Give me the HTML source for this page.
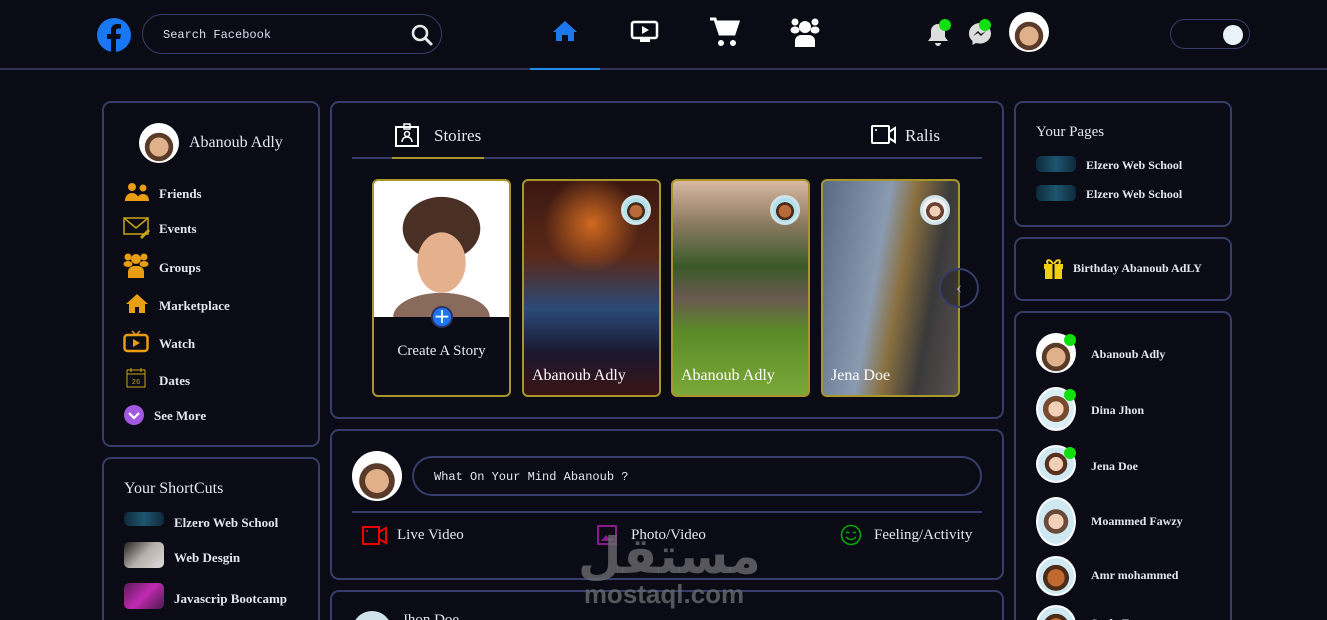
<!DOCTYPE html>
<html style="width:1327px;height:620px;overflow:hidden"><head><meta charset="utf-8"><style>
*{box-sizing:border-box;margin:0;padding:0}
html,body{width:1327px;height:620px;overflow:hidden}
body{background:#0a0b14;font-family:"Liberation Serif",serif;color:#e4e6f2;position:relative}
.abs{position:absolute}
.panel{position:absolute;border:2px solid #363d6b;border-radius:9px}
.av{position:absolute;border-radius:50%;overflow:hidden;background:radial-gradient(circle at 50% 60%,#e0b08a 0 30%,#5a3a28 31% 45%,#fff 46%)}
.b{font-weight:bold;font-size:13px;position:absolute;color:#e2e4f0}
.green{position:absolute;width:12px;height:12px;border-radius:50%;background:#10e010}
.card{position:absolute;top:179px;width:139px;height:218px;border:2px solid #a8962c;border-radius:6px;overflow:hidden}
.card .n{position:absolute;left:8px;bottom:10px;font-size:16px;color:#fff}
.sav{position:absolute;right:8px;top:14px;width:30px;height:30px;border-radius:50%;border:3px solid #cfe3ea;background:radial-gradient(circle at 50% 55%,#b86b3a 0 35%,#4a2a18 36% 50%,#aee0ee 51%)}
.thumb{position:absolute;width:40px;height:26px;border-radius:5px}
</style></head><body>
<div class="abs" style="left:0;top:68px;width:1327px;height:2px;background:#2d3152"></div>
<div class="abs" style="left:530px;top:68px;width:70px;height:2px;background:#1f8bea"></div>
<svg class="abs" style="left:96px;top:17px" width="36" height="36" viewBox="0 0 36 36"><circle cx="18" cy="18" r="17" fill="#1877f2"/><path d="M20 36V22h4l1-5h-5v-3c0-1.5.5-2.5 2.6-2.5H25V7.2c-.5 0-2-.2-3.8-.2-3.8 0-6.2 2.3-6.2 6.4V17h-4v5h4v14z" fill="#0a0b14"/></svg>
<div class="abs" style="left:142px;top:14px;width:300px;height:40px;border:1px solid #373e6a;border-radius:20px"></div>
<div class="abs" style="left:163px;top:28px;font-family:'Liberation Mono',monospace;font-size:12px;color:#dde">Search Facebook</div>
<svg class="abs" style="left:410px;top:23px" width="24" height="24" viewBox="0 0 24 24"><circle cx="10" cy="10" r="7" fill="none" stroke="#e8e8e8" stroke-width="2.6"/><path d="M15 15l6 6" stroke="#e8e8e8" stroke-width="3" stroke-linecap="round"/></svg>
<svg class="abs" style="left:552px;top:20px" width="26" height="22" viewBox="0 0 26 22"><path d="M13 1L1 12h3v9h6v-6h6v6h6v-9h3z" fill="#1d78f0"/></svg>
<svg class="abs" style="left:630px;top:20px" width="30" height="24" viewBox="0 0 30 24"><rect x="2" y="2" width="25" height="16" rx="2" fill="none" stroke="#fff" stroke-width="2.5"/><path d="M12 6v8l7-4z" fill="#fff"/><rect x="10" y="19" width="10" height="3" fill="#fff"/></svg>
<svg class="abs" style="left:709px;top:17px" width="32" height="30" viewBox="0 0 32 30"><path d="M1 2h5l5 15h14l4-12H8" fill="none" stroke="#fff" stroke-width="3"/><path d="M8 5h21l-4 12H11z" fill="#fff"/><circle cx="12" cy="26" r="3" fill="#fff"/><circle cx="24" cy="26" r="3" fill="#fff"/></svg>
<svg class="abs" style="left:789px;top:17px" width="32" height="30" viewBox="0 0 32 30"><circle cx="6" cy="5" r="3.5" fill="#fff"/><circle cx="26" cy="5" r="3.5" fill="#fff"/><circle cx="16" cy="10" r="6" fill="#fff"/><ellipse cx="6" cy="13" rx="4.5" ry="3.5" fill="#fff"/><ellipse cx="26" cy="13" rx="4.5" ry="3.5" fill="#fff"/><path d="M6 30v-6a6 6 0 0 1 6-6h8a6 6 0 0 1 6 6v6z" fill="#fff"/></svg>
<svg class="abs" style="left:927px;top:22px" width="22" height="24" viewBox="0 0 22 24"><path d="M11 2a7 7 0 0 0-7 7v6l-3 4h20l-3-4V9a7 7 0 0 0-7-7zM8 21a3 3 0 0 0 6 0z" fill="#ddd"/></svg>
<div class="green" style="left:939px;top:19px"></div>
<svg class="abs" style="left:968px;top:22px" width="24" height="24" viewBox="0 0 24 24"><path d="M12 1C6 1 1 5.5 1 11.5c0 3 1.3 5.7 3.5 7.5v4l3.5-2c1.2.4 2.6.6 4 .6 6 0 11-4.5 11-10.1S18 1 12 1z" fill="#ddd"/><path d="M5 14l5-5 3 3 5-3-5 5-3-3z" fill="#0a0b14"/></svg>
<div class="green" style="left:979px;top:19px"></div>
<div class="av" style="left:1009px;top:12px;width:40px;height:40px"></div>
<div class="abs" style="left:1170px;top:19px;width:80px;height:30px;border:1px solid #373e6a;border-radius:15px"></div>
<div class="abs" style="left:1223px;top:25px;width:20px;height:20px;border-radius:50%;background:#e8f2f8"></div>

<div class="panel" style="left:102px;top:101px;width:218px;height:346px"></div>
<div class="av" style="left:139px;top:123px;width:40px;height:40px"></div>
<div class="abs" style="left:189px;top:134px;font-size:16px">Abanoub Adly</div>
<svg class="abs" style="left:124px;top:182px" width="26" height="20" viewBox="0 0 26 20"><circle cx="8" cy="5" r="4" fill="#e89d13"/><circle cx="19" cy="6" r="3.5" fill="#e89d13"/><path d="M1 19c0-5 3-8 7-8s7 3 7 8z M13 19c0-4 2-7 6-7s6 3 6 7z" fill="#e89d13"/></svg>
<div class="b" style="left:159px;top:186px">Friends</div>
<svg class="abs" style="left:123px;top:216px" width="27" height="23" viewBox="0 0 27 23"><rect x="1" y="2" width="24" height="16" fill="none" stroke="#c8a416" stroke-width="1.5"/><path d="M1 2l12 10 12-10" fill="none" stroke="#c8a416" stroke-width="1.5"/><path d="M17 21l8-8 2 2-8 8z" fill="#c8a416"/></svg>
<div class="b" style="left:159px;top:221px">Events</div>
<svg class="abs" style="left:123px;top:252px" width="26" height="26" viewBox="0 0 26 26"><circle cx="5" cy="5" r="3.5" fill="#e89d13"/><circle cx="21" cy="5" r="3.5" fill="#e89d13"/><circle cx="13" cy="7" r="5" fill="#e89d13"/><ellipse cx="5" cy="12" rx="4.5" ry="3" fill="#e89d13"/><ellipse cx="21" cy="12" rx="4.5" ry="3" fill="#e89d13"/><path d="M5 26v-6a6 6 0 0 1 6-6h4a6 6 0 0 1 6 6v6z" fill="#e89d13"/></svg>
<div class="b" style="left:159px;top:260px">Groups</div>
<svg class="abs" style="left:126px;top:294px" width="22" height="19" viewBox="0 0 22 19"><path d="M11 0L0 10h3v9h6v-6h4v6h6v-9h3z" fill="#e89d13"/></svg>
<div class="b" style="left:159px;top:298px">Marketplace</div>
<svg class="abs" style="left:123px;top:330px" width="26" height="23" viewBox="0 0 26 23"><path d="M9 1l4 4 4-4" stroke="#e89d13" stroke-width="1.5" fill="none"/><rect x="1.5" y="5" width="23" height="16" rx="3" fill="none" stroke="#e89d13" stroke-width="2.5"/><path d="M10 9v8l7-4z" fill="#e89d13"/></svg>
<div class="b" style="left:159px;top:336px">Watch</div>
<svg class="abs" style="left:126px;top:367px" width="20" height="21" viewBox="0 0 20 21"><rect x="1" y="3" width="18" height="17" fill="none" stroke="#c8a416" stroke-width="1"/><path d="M1 7h18M5 1v4M15 1v4" stroke="#c8a416"/><text x="10" y="17" font-size="7" fill="#c8a416" text-anchor="middle" font-family="Liberation Mono">26</text></svg>
<div class="b" style="left:159px;top:373px">Dates</div>
<svg class="abs" style="left:124px;top:405px" width="20" height="20" viewBox="0 0 20 20"><circle cx="10" cy="10" r="10" fill="#a358e0"/><path d="M5 8l5 5 5-5" stroke="#fff" stroke-width="2.2" fill="none"/></svg>
<div class="b" style="left:154px;top:408px">See More</div>

<div class="panel" style="left:102px;top:457px;width:218px;height:180px"></div>
<div class="abs" style="left:124px;top:480px;font-size:16px">Your ShortCuts</div>
<div class="thumb" style="left:124px;top:512px;height:14px;background:linear-gradient(90deg,#0e2a3a,#1e5570,#0e2a3a)"></div>
<div class="b" style="left:174px;top:515px">Elzero Web School</div>
<div class="thumb" style="left:124px;top:542px;background:linear-gradient(135deg,#222,#b8b0aa 50%,#ddd)"></div>
<div class="b" style="left:174px;top:550px">Web Desgin</div>
<div class="thumb" style="left:124px;top:583px;background:linear-gradient(135deg,#5a1a5a,#c02ab0,#4a1a4a)"></div>
<div class="b" style="left:174px;top:591px">Javascrip Bootcamp</div>

<div class="panel" style="left:330px;top:101px;width:674px;height:318px"></div>
<svg class="abs" style="left:395px;top:123px" width="25" height="24" viewBox="0 0 25 24"><rect x="1" y="4" width="22" height="19" fill="none" stroke="#fff" stroke-width="2"/><rect x="9" y="1" width="6" height="5" fill="none" stroke="#fff" stroke-width="1.5"/><circle cx="12" cy="11" r="2.5" fill="none" stroke="#fff" stroke-width="1.5"/><path d="M7 19c0-3 2-5 5-5s5 2 5 5" fill="none" stroke="#fff" stroke-width="1.5"/></svg>
<div class="abs" style="left:434px;top:126px;font-size:17px">Stoires</div>
<svg class="abs" style="left:871px;top:124px" width="26" height="22" viewBox="0 0 26 22"><rect x="1" y="2" width="17" height="17" rx="1" fill="none" stroke="#fff" stroke-width="2"/><path d="M18 8l6-4v14l-6-4" fill="none" stroke="#fff" stroke-width="2"/><circle cx="5" cy="6" r="1" fill="#fff"/></svg>
<div class="abs" style="left:905px;top:126px;font-size:17px">Ralis</div>
<div class="abs" style="left:352px;top:157px;width:630px;height:2px;background:#363d6b"></div>
<div class="abs" style="left:392px;top:157px;width:92px;height:2px;background:#a8962c"></div>

<div class="card" style="left:372px;background:#0a0b14">
 <div class="abs" style="left:0;top:0;width:135px;height:136px;background:radial-gradient(ellipse 40px 50px at 50% 60%,#e4b08e 0 60%,transparent 61%),radial-gradient(ellipse 55px 45px at 50% 35%,#4a3024 0 70%,transparent 71%),radial-gradient(ellipse 60px 30px at 50% 100%,#8a6a5a 0 80%,transparent 81%),#fff"></div>
 <div class="abs" style="left:57px;top:125px;width:22px;height:22px;border-radius:50%;background:#1d78f0;border:2px solid #2a3566;color:#fff;font-size:20px;line-height:16px;text-align:center;font-family:'DejaVu Sans'">+</div>
 <div class="abs" style="left:0;width:135px;top:162px;text-align:center;font-size:15px">Create A Story</div>
</div>
<div class="card" style="left:522px;background:radial-gradient(ellipse 60px 60px at 50% 20%,#d06a20,transparent 80%),linear-gradient(180deg,#3a1810 0%,#5a2818 35%,#2a4a78 60%,#1a1830 80%,#3a1414 100%)"><div class="sav"></div><div class="n">Abanoub Adly</div></div>
<div class="card" style="left:671px;background:linear-gradient(180deg,#d8b8a0 0%,#8a7a60 20%,#3a5a28 40%,#6a5a50 55%,#5a8a28 70%,#7aa838 100%)"><div class="sav"></div><div class="n">Abanoub Adly</div></div>
<div class="card" style="left:821px;background:linear-gradient(100deg,#5a6a80 0%,#8a9ab0 40%,#8a7040 55%,#3a3a3a 75%,#5a5050 100%)"><div class="sav" style="background:radial-gradient(circle at 50% 55%,#f0d0b8 0 30%,#6a4030 31% 50%,#f0f0f0 51%)"></div><div class="n">Jena Doe</div></div>
<div class="abs" style="left:939px;top:268px;width:40px;height:40px;border-radius:50%;border:2px solid #363d6b;background:rgba(10,11,20,.3);color:#aaa;font-size:18px;line-height:34px;text-align:center">‹</div>

<div class="panel" style="left:330px;top:429px;width:674px;height:151px"></div>
<div class="av" style="left:352px;top:451px;width:50px;height:50px;border-radius:50%"></div>
<div class="abs" style="left:412px;top:456px;width:570px;height:40px;border:2px solid #363d6b;border-radius:20px"></div>
<div class="abs" style="left:434px;top:470px;font-family:'Liberation Mono',monospace;font-size:12px">What On Your Mind Abanoub ?</div>
<div class="abs" style="left:352px;top:511px;width:630px;height:2px;background:#363d6b"></div>
<svg class="abs" style="left:362px;top:525px" width="26" height="21" viewBox="0 0 26 21"><rect x="1" y="2" width="16" height="17" fill="none" stroke="#e00" stroke-width="2"/><path d="M17 7l7-4v15l-7-4" fill="none" stroke="#e00" stroke-width="2"/><circle cx="5" cy="6" r="1.2" fill="#e00"/></svg>
<div class="abs" style="left:397px;top:527px;font-size:15px">Live Video</div>
<svg class="abs" style="left:597px;top:525px" width="20" height="20" viewBox="0 0 20 20"><rect x="1" y="1" width="18" height="18" fill="none" stroke="#8a1a8a" stroke-width="2"/><path d="M4 16l5-6 4 4 3-3v5z" fill="#8a1a8a"/></svg>
<div class="abs" style="left:631px;top:527px;font-size:15px">Photo/Video</div>
<svg class="abs" style="left:840px;top:524px" width="22" height="22" viewBox="0 0 22 22"><circle cx="11" cy="11" r="9.5" fill="none" stroke="#0a0" stroke-width="1.6"/><path d="M6 9q1.5-1.5 3 0M13 9q1.5-1.5 3 0M6 13q5 5 10 0" fill="none" stroke="#0a0" stroke-width="1.5"/></svg>
<div class="abs" style="left:874px;top:527px;font-size:15px">Feeling/Activity</div>

<div class="panel" style="left:330px;top:590px;width:674px;height:60px"></div>
<div class="av" style="left:352px;top:611px;width:40px;height:40px;background:#cfe3ea"></div>
<div class="abs" style="left:402px;top:612px;font-size:15px">Jhon Doe</div>

<div class="abs" style="left:578px;top:526px;width:172px;text-align:center;font-family:'DejaVu Sans',sans-serif;font-weight:bold;font-size:50px;color:rgba(105,105,110,.8);line-height:60px">مستقل</div>
<div class="abs" style="left:578px;top:579px;width:172px;text-align:center;font-family:'Liberation Sans',sans-serif;font-weight:bold;font-size:26px;color:rgba(105,105,110,.8)">mostaql.com</div>

<div class="panel" style="left:1014px;top:101px;width:218px;height:126px"></div>
<div class="abs" style="left:1036px;top:124px;font-size:15px">Your Pages</div>
<div class="thumb" style="left:1036px;top:156px;height:16px;background:linear-gradient(90deg,#0e2a3a,#1e5570,#0e2a3a)"></div>
<div class="b" style="left:1086px;top:158px;font-size:12px">Elzero Web School</div>
<div class="thumb" style="left:1036px;top:185px;height:16px;background:linear-gradient(90deg,#0e2a3a,#1e5570,#0e2a3a)"></div>
<div class="b" style="left:1086px;top:187px;font-size:12px">Elzero Web School</div>

<div class="panel" style="left:1014px;top:237px;width:218px;height:64px"></div>
<svg class="abs" style="left:1043px;top:258px" width="21" height="21" viewBox="0 0 21 21"><path d="M10 6C7 0 2 2 5 6M11 6c3-6 8-4 5 0" fill="none" stroke="#f0d010" stroke-width="2"/><rect x="1" y="6" width="19" height="5" fill="#f0d010"/><rect x="2" y="11" width="17" height="10" fill="#f0d010"/><rect x="9.5" y="6" width="2" height="15" fill="#0a0b14"/></svg>
<div class="b" style="left:1073px;top:261px;font-size:12px">Birthday Abanoub AdLY</div>

<div class="panel" style="left:1014px;top:311px;width:218px;height:340px"></div>
<div class="av" style="left:1036px;top:333px;width:40px;height:40px"></div><div class="green" style="left:1064px;top:334px"></div>
<div class="b" style="left:1091px;top:347px;font-size:12px">Abanoub Adly</div>
<div class="av" style="left:1036px;top:387px;width:40px;height:44px;background:radial-gradient(circle at 50% 50%,#f2d0b8 0 28%,#7a4a30 29% 48%,#d8eef4 49%);border:2px solid #fff"></div><div class="green" style="left:1064px;top:389px"></div>
<div class="b" style="left:1091px;top:403px;font-size:12px">Dina Jhon</div>
<div class="av" style="left:1036px;top:445px;width:40px;height:38px;background:radial-gradient(circle at 50% 50%,#f2d0b8 0 28%,#5a3020 29% 45%,#cfe9f2 46%);border:2px solid #fff"></div><div class="green" style="left:1064px;top:447px"></div>
<div class="b" style="left:1091px;top:459px;font-size:12px">Jena Doe</div>
<div class="av" style="left:1036px;top:497px;width:40px;height:49px;background:radial-gradient(circle at 50% 50%,#f2d0b8 0 26%,#6a4a38 27% 42%,#cfe9f2 43%);border:2px solid #fff"></div>
<div class="b" style="left:1091px;top:514px;font-size:12px">Moammed Fawzy</div>
<div class="av" style="left:1036px;top:556px;width:40px;height:40px;background:radial-gradient(circle at 50% 55%,#c06a30 0 32%,#4a2a18 33% 48%,#cfe9f2 49%);border:2px solid #fff"></div>
<div class="b" style="left:1091px;top:568px;font-size:12px">Amr mohammed</div>
<div class="av" style="left:1036px;top:605px;width:40px;height:40px;background:radial-gradient(circle at 50% 55%,#c06a30 0 32%,#4a2a18 33% 48%,#cfe9f2 49%);border:2px solid #fff"></div>
<div class="b" style="left:1091px;top:616px;font-size:12px">Sayla Fawzy</div>
</body></html>
